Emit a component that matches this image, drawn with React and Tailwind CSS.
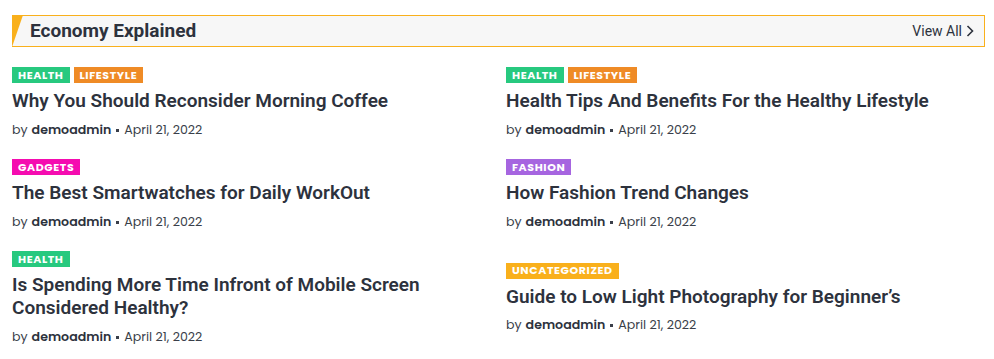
import React from "react";

const tagColors = {
  HEALTH: "bg-[#27c97f]",
  LIFESTYLE: "bg-[#ef8b26]",
  GADGETS: "bg-[#f50cb0]",
  FASHION: "bg-[#a665e0]",
  UNCATEGORIZED: "bg-[#f9b01c]",
};

const posts = [
  { tags: ["HEALTH", "LIFESTYLE"], title: "Why You Should Reconsider Morning Coffee" },
  { tags: ["HEALTH", "LIFESTYLE"], title: "Health Tips And Benefits For the Healthy Lifestyle" },
  { tags: ["GADGETS"], title: "The Best Smartwatches for Daily WorkOut" },
  { tags: ["FASHION"], title: "How Fashion Trend Changes" },
  { tags: ["HEALTH"], title: "Is Spending More Time Infront of Mobile Screen Considered Healthy?" },
  { tags: ["UNCATEGORIZED"], title: "Guide to Low Light Photography for Beginner\u2019s" },
];

const poppins = { fontFamily: "Poppins, Inter, 'Open Sans', sans-serif" };

function Post({ p }) {
  return (
    <div className="flex flex-col">
      <div className="flex gap-[4px]">
        {p.tags.map((t) => (
          <span
            key={t}
            className={`${tagColors[t]} h-[16px] px-[6px] flex items-center text-[11px] font-bold tracking-[0.6px] text-white leading-none`}
            style={poppins}
          >
            {t}
          </span>
        ))}
      </div>
      <h3 className="mt-[6px] text-[19px] leading-[23px] font-semibold text-[#2d323d] font-['Roboto',sans-serif]">
        {p.title}
      </h3>
      <div className="mt-[8px] h-[20px] flex items-center text-[12.6px] text-[#3a3f4a]" style={poppins}>
        <span>by</span>
        <span className="ml-[4px] font-semibold text-[#2d323d]">demoadmin</span>
        <span className="mx-[5px] w-[3px] h-[3px] bg-[#3a3f4a]"></span>
        <span>April 21, 2022</span>
      </div>
    </div>
  );
}

export default function App() {
  return (
    <div className="w-[994px] h-[359px] bg-white pl-3 pr-[9px] pt-[15px] overflow-hidden">
      <div className="relative h-[32px] bg-[#f7f7f7] border-y border-r border-[#f9b01c] flex items-center justify-between font-['Roboto',sans-serif]">
        <svg className="absolute left-0 top-[-1px]" width="11" height="32" viewBox="0 0 11 32">
          <polygon points="0,0 11,0 0,32" fill="#f9b01c" />
        </svg>
        <h2 className="pl-[18px] text-[19px] font-bold text-[#2d323d]">Economy Explained</h2>
        <a className="pr-[10px] flex items-center gap-[4px] text-[14px] text-[#2d323d]">
          View All
          <svg width="8" height="12" viewBox="0 0 8 12" fill="none">
            <path d="M1.5 1 L6.5 6 L1.5 11" stroke="#2d323d" strokeWidth="1.6" />
          </svg>
        </a>
      </div>
      <div className="mt-[20px] grid grid-cols-2 gap-x-[15px] gap-y-[19px] items-center">
        {posts.map((p, i) => (
          <Post key={i} p={p} />
        ))}
      </div>
    </div>
  );
}
